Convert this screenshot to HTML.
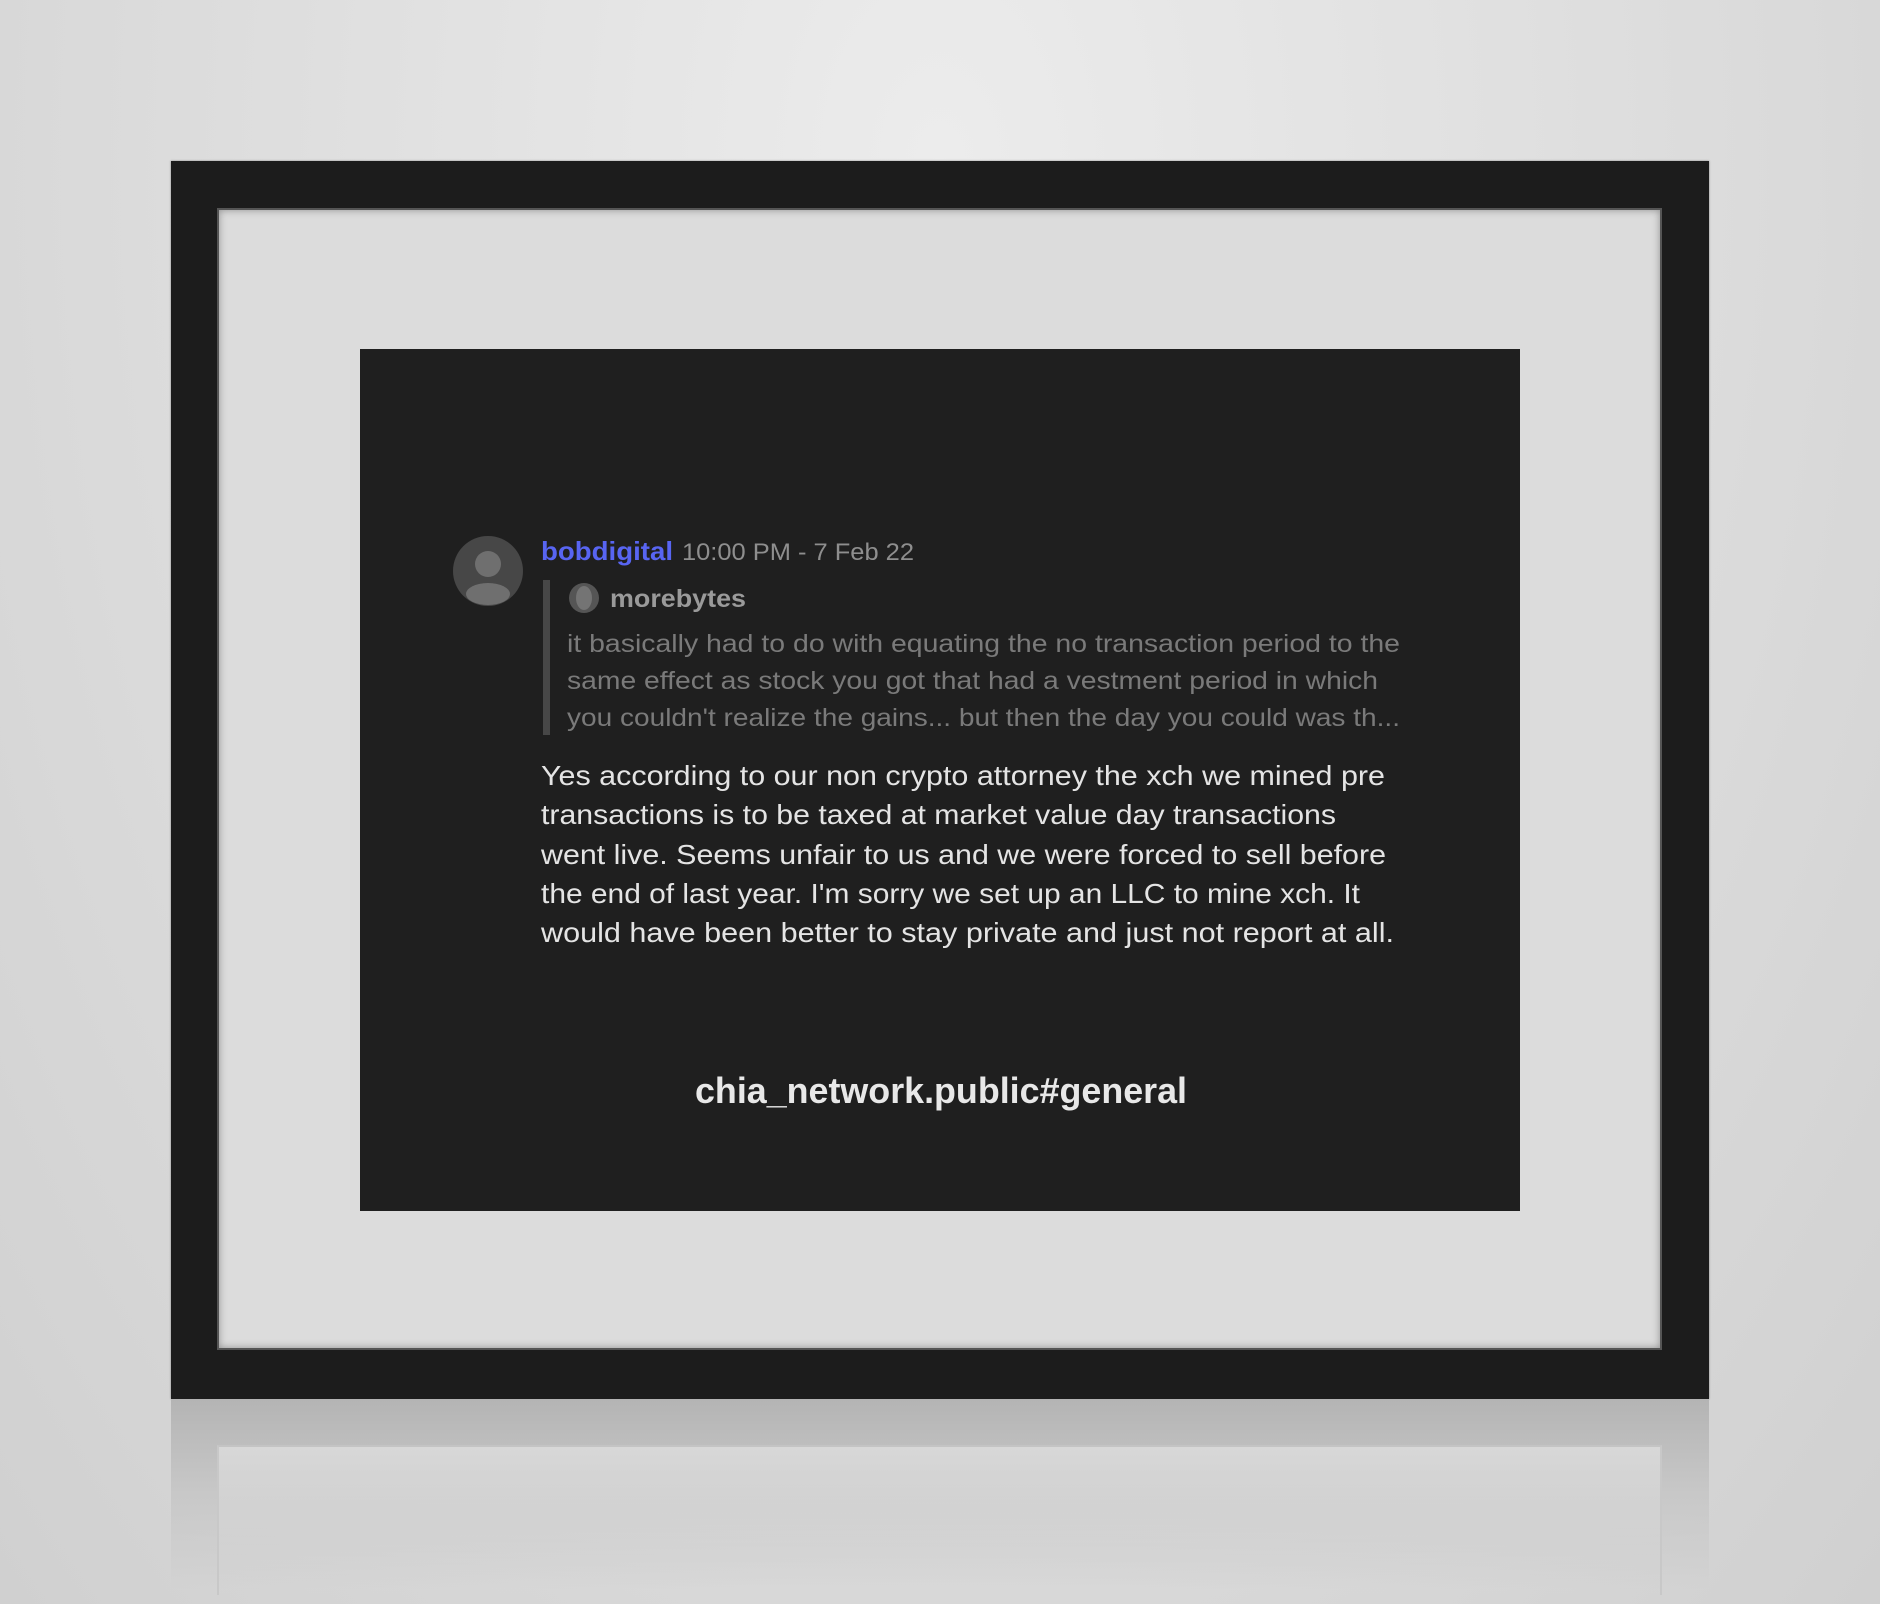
<!DOCTYPE html>
<html><head><meta charset="utf-8"><style>
html,body{margin:0;padding:0}
body{width:1880px;height:1604px;position:relative;overflow:hidden;background:radial-gradient(ellipse at 50% 10%,#ececec 0%,#dedede 50%,#d0d0d0 100%);font-family:"Liberation Sans",sans-serif}
.frame{position:absolute;left:171px;top:161px;width:1538px;height:1238px;background:#1c1c1c;box-shadow:0 0 2px rgba(0,0,0,.4)}
.mat{position:absolute;left:217px;top:208px;width:1445px;height:1142px;background:#dcdcdc;box-shadow:inset 0 0 8px rgba(0,0,0,.35);border:2px solid #555;box-sizing:border-box}
.panel{position:absolute;left:360px;top:349px;width:1160px;height:862px;background:#1f1f1f}
.refl{position:absolute;left:171px;top:1399px;width:1538px;height:190px;background:linear-gradient(#b4b4b4,#c8c8c8 50%,rgba(210,210,210,0))}
.reflmat{position:absolute;left:217px;top:1445px;width:1445px;height:150px;background:linear-gradient(#d8d8d8,rgba(214,214,214,0));border-top:2px solid #c4c4c4;border-left:2px solid #c8c8c8;border-right:2px solid #c8c8c8;box-sizing:border-box}
svg{position:absolute;left:0;top:0}
</style></head><body>
<div class="frame"></div>
<div class="mat"></div>
<div class="panel"></div>
<div class="refl"></div>
<div class="reflmat"></div>
<svg width="1880" height="1604" viewBox="0 0 1880 1604">
<circle cx="488" cy="571" r="35" fill="#474747"/>
<circle cx="488" cy="564" r="13" fill="#6f6f6f"/>
<ellipse cx="488" cy="594" rx="22" ry="11" fill="#6f6f6f"/>
<rect x="543" y="580" width="7" height="155" fill="#474747"/>
<circle cx="584" cy="598" r="15" fill="#555"/>
<ellipse cx="584" cy="598" rx="8" ry="12" fill="#888" opacity=".6"/>
<text x="541" y="560" font-size="26" font-weight="bold" fill="#5865f2" textLength="132" lengthAdjust="spacingAndGlyphs">bobdigital</text>
<text x="682" y="560" font-size="24" fill="#8e8e8e" textLength="232" lengthAdjust="spacingAndGlyphs">10:00 PM - 7 Feb 22</text>
<text x="610" y="607" font-size="25" font-weight="bold" fill="#9a9a9a" textLength="136" lengthAdjust="spacingAndGlyphs">morebytes</text>
<g font-size="25" fill="#7a7a7a">
<text x="567" y="652" textLength="833" lengthAdjust="spacingAndGlyphs">it basically had to do with equating the no transaction period to the</text>
<text x="567" y="689" textLength="811" lengthAdjust="spacingAndGlyphs">same effect as stock you got that had a vestment period in which</text>
<text x="567" y="726" textLength="833" lengthAdjust="spacingAndGlyphs">you couldn't realize the gains... but then the day you could was th...</text>
</g>
<g font-size="28" fill="#e4e4e4">
<text x="541" y="785" textLength="844" lengthAdjust="spacingAndGlyphs">Yes according to our non crypto attorney the xch we mined pre</text>
<text x="541" y="824" textLength="795" lengthAdjust="spacingAndGlyphs">transactions is to be taxed at market value day transactions</text>
<text x="541" y="864" textLength="845" lengthAdjust="spacingAndGlyphs">went live. Seems unfair to us and we were forced to sell before</text>
<text x="541" y="903" textLength="819" lengthAdjust="spacingAndGlyphs">the end of last year. I'm sorry we set up an LLC to mine xch. It</text>
<text x="541" y="942" textLength="853" lengthAdjust="spacingAndGlyphs">would have been better to stay private and just not report at all.</text>
</g>
<text x="695" y="1103" font-size="36" font-weight="bold" fill="#e8e8e8" textLength="492" lengthAdjust="spacingAndGlyphs">chia_network.public#general</text>
</svg>
</body></html>
